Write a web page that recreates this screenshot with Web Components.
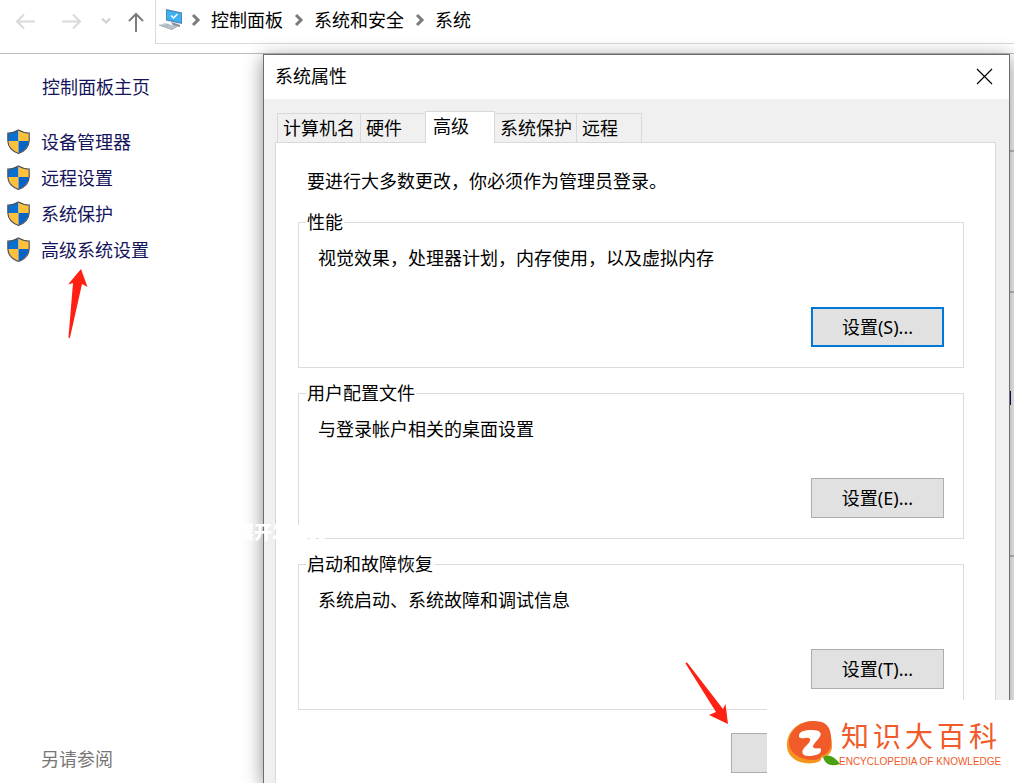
<!DOCTYPE html>
<html lang="zh-CN">
<head>
<meta charset="utf-8">
<title>系统属性</title>
<style>
html, body { margin: 0; }
body {
  font: 18px/24px "Noto Sans", "Noto Sans CJK SC", sans-serif;
  color: #000; background: #fff; overflow: hidden;
}
</style>
</head>
<body>
<control-panel></control-panel>
<script>
const define = (name, html, setup) => customElements.define(name, class extends HTMLElement {
  constructor() {
    super();
    const t = document.createElement('template');
    t.innerHTML = html;
    this.attachShadow({ mode: 'open' }).append(t.content.cloneNode(true));
  }
  connectedCallback() { if (setup) setup(this, this.shadowRoot); }
});

define('nav-bar', `
<style>
:host { display: flex; height: 53px; border-bottom: 1px solid #bdbdbd; }
nav { display: flex; gap: 12px; width: 155px; box-sizing: border-box; padding-left: 12px; flex: none; }
button { border: 0; padding: 0; background: none; height: 43px; flex: none; }
button svg { display: block; }
.history { display: flex; gap: 18px; }
ol {
  flex: 1; display: flex; align-items: center; margin: 0; padding: 0 0 4px 3px; list-style: none;
  height: 39px; border: solid #d9d9d9; border-width: 0 0 1px 1px;
}
li { display: flex; align-items: center; }
a { color: #000; text-decoration: none; }
.sep { width: 31px; }
svg { fill: none; display: block; }
</style>
<nav aria-label="导航">
  <div class="history">
    <button aria-label="后退"><svg width="26" height="43" stroke="#d9d9d9" stroke-width="2"><path d="M23 21.500H5M12 14.500L5 21.500L12 28.500"/></svg></button>
    <button aria-label="前进"><svg width="26" height="43" stroke="#d9d9d9" stroke-width="2"><path d="M6 21.500H24M17 14.500L24 21.500L17 28.500"/></svg></button>
    <button aria-label="最近"><svg width="12" height="43" stroke="#d0d0d0" stroke-width="2"><path d="M2 18.500L6 22.500L10 18.500"/></svg></button>
  </div>
  <button aria-label="向上"><svg width="24" height="43" stroke="#7d7d7d" stroke-width="2"><path d="M12 32V14M5 21L12 14L19 21"/></svg></button>
</nav>
<ol>
  <li><svg width="24" height="26" viewBox="0 0 24 26" aria-hidden="true">
    <path d="M7 2L23 5.500V17L7 13.500Z" fill="#4c86b4"/><path d="M8 3.500L22 6.500V15.500L8 12.500Z" fill="#3fb0f4"/>
    <path d="M12 8.500L14.500 11L18.500 7" stroke="#fff" stroke-width="1.500"/>
    <path d="M12 15L17 16.500L21 18V20L14 18.500Z" fill="#88929b"/>
    <path d="M0 18L6 16L18 19.500L13 22.500Z" fill="#c7d1da"/><path d="M3 18L14 21M6 17L16 20M6 20L10 17" stroke="#a3afb9" stroke-width=".7"/>
    <path d="M0 18L13 22.500L18 19.500" stroke="#9ba8b2"/>
  </svg><svg width="28" height="20"><path d="M10 5L15 10L10 15" stroke="#7a7a7a" stroke-width="3"/></svg></li>
  <li><a href="#">控制面板</a><svg class="sep" height="20"><path d="M13 5L18 10L13 15" stroke="#7a7a7a" stroke-width="3"/></svg></li>
  <li><a href="#">系统和安全</a><svg class="sep" height="20"><path d="M13 5L18 10L13 15" stroke="#7a7a7a" stroke-width="3"/></svg></li>
  <li><a href="#">系统</a></li>
</ol>`);

define('shield-link', `
<style>
:host { display: flex; align-items: center; gap: 11px; height: 36px; padding-left: 7px; }
svg { flex: none; }
a { color: #14145a; text-decoration: none; }
</style>
<svg width="23" height="26" viewBox="0 0 23 26" aria-hidden="true">
  <path d="M11.500 1L1 4.500V12H11.500Z" fill="#0a6fd0"/><path d="M11.500 1L22 4.500V12H11.500Z" fill="#ffc03c"/>
  <path d="M1 12H11.500V24.500Q2 20 1 12Z" fill="#ffc03c"/><path d="M22 12H11.500V24.500Q21 20 22 12Z" fill="#0663c7"/>
  <path d="M11.500 1Q7 4 .8 4V11.500Q1 20.500 11.500 24.500Q22 20.500 22.200 11.500V4Q16 4 11.500 1Z" fill="none" stroke="#4d5358" stroke-width="1.200"/>
</svg>
<a href="#"><slot></slot></a>`);

define('side-bar', `
<style>
:host { display: flex; flex-direction: column; padding: 21px 0 12px; box-sizing: border-box; }
.home { margin: 0 0 25px 42px; color: #14145a; text-decoration: none; }
.see { margin: auto 0 0 41px; color: #777; }
</style>
<a class="home" href="#">控制面板主页</a>
<shield-link>设备管理器</shield-link>
<shield-link>远程设置</shield-link>
<shield-link>系统保护</shield-link>
<shield-link>高级系统设置</shield-link>
<span class="see">另请参阅</span>`);

define('push-button', `
<style>
:host { display: block; width: 133px; }
button {
  display: block; width: 100%; height: 40px; padding: 0; box-sizing: border-box; font: inherit; color: #000;
  background: #e1e1e1; border: 1px solid #adadad; border-radius: 0;
}
:host([focused]) button { border: 2px solid #0078d7; }
</style>
<button><slot></slot></button>`, (host, root) => {
  if (host.hasAttribute('label')) root.querySelector('button').setAttribute('aria-label', host.getAttribute('label'));
});

define('group-box', `
<style>
:host { display: block; }
fieldset { margin: 0; padding: 0 19px 20px; border: 1px solid #dcdcdc; min-width: 0; }
legend { margin-left: -12px; padding: 0 1px; line-height: 23px; }
.inner { display: flex; flex-direction: column; height: 113px; }
p { margin: 12px 0 0; }
.actions { margin-top: auto; display: flex; justify-content: flex-end; }
</style>
<fieldset>
  <legend><slot name="title"></slot></legend>
  <div class="inner"><p><slot></slot></p><div class="actions"><slot name="action"></slot></div></div>
</fieldset>`);

define('tab-strip', `
<style>
:host { display: flex; align-items: flex-end; height: 43px; padding-left: 2px; }
button {
  height: 29px; padding: 0 4px 0 5px; border: 1px solid #d9d9d9; border-bottom: 0; border-radius: 0;
  background: #f0f0f0; font: inherit; color: #000; text-align: left; margin-right: -1px;
}
button.first { min-width: 84px; }
button.short { min-width: 66px; }
button[aria-selected="true"] {
  height: 32px; min-width: 70px; margin-bottom: -1px; padding: 0 7px 4px; background: #fff; position: relative;
}
</style>
<button role="tab" class="first">计算机名</button><button role="tab" class="short">硬件</button><button role="tab" aria-selected="true">高级</button><button role="tab">系统保护</button><button role="tab" class="short">远程</button>`);

define('properties-dialog', `
<style>
:host {
  display: flex; flex-direction: column; box-sizing: border-box; border: 1px solid #6e6e6e; border-bottom: 0;
  background: #f0f0f0; box-shadow: 0 4px 18px rgba(0,0,0,.45);
}
header { display: flex; align-items: center; justify-content: space-between; height: 42px; padding: 0 16px 2px 11px; background: #fff; }
h1 { margin: 0; font: inherit; }
header button { border: 0; padding: 0; background: none; display: block; }
svg { display: block; }
.body { flex: 1; display: flex; flex-direction: column; padding: 0 13px 0 11px; }
.panel {
  flex: 1; display: flex; flex-direction: column; gap: 14px; padding: 26px 31px 8px 22px;
  background: #fff; border: 1px solid #d9d9d9; border-bottom: 0;
}
p { margin: 0 0 4px 9px; }
.env { display: flex; justify-content: flex-end; margin-top: 9px; }
.env push-button { width: 233px; }
</style>
<header><h1>系统属性</h1><button aria-label="关闭"><svg width="17" height="17" fill="none" stroke="#000" stroke-width="1.200"><path d="M1 1L16 16M16 1L1 16"/></svg></button></header>
<div class="body">
  <tab-strip role="tablist"></tab-strip>
  <div class="panel" role="tabpanel">
    <p>要进行大多数更改，你必须作为管理员登录。</p>
    <group-box><span slot="title">性能</span>视觉效果，处理器计划，内存使用，以及虚拟内存<push-button slot="action" focused>设置(S)...</push-button></group-box>
    <group-box><span slot="title">用户配置文件</span>与登录帐户相关的桌面设置<push-button slot="action">设置(E)...</push-button></group-box>
    <group-box><span slot="title">启动和故障恢复</span>系统启动、系统故障和调试信息<push-button slot="action">设置(T)...</push-button></group-box>
    <div class="env"><push-button label="环境变量"></push-button></div>
  </div>
</div>`);

define('site-logo', `
<style>
:host { display: flex; width: 247px; height: 83px; box-sizing: border-box; padding: 17px 0 0 19px; background: #fff; color: #f15a29; }
svg { flex: none; margin-top: 3px; }
.words { display: flex; flex-direction: column; margin-left: -1px; }
.name { font-size: 28px; line-height: 38px; display: flex; gap: 4px; margin-left: 2px; }
.sub { font: 10px/14px "Liberation Sans", sans-serif; white-space: nowrap; }
</style>
<svg width="54" height="50" viewBox="0 0 54 50" aria-hidden="true">
  <path d="M27 1C10 1 0 14 1 27C2 39 15 45 28 43Q36 42 35 38C47 35 47 28 45 18Z" fill="#f7941e"/>
  <path d="M28 1C14 1 3 11 3 22C3 33 14 40 28 40Q35 39 35 36C45 33 46 25 45 16C44 4 37 1 28 1Z" fill="#f15a29"/>
  <path d="M13 17C12 11 19 10 26 10C34 10 37 13 33 18C30 22 27 24 27 27C29 30 34 27 35 29C36 34 29 36 23 36C15 36 15 31 19 27C23 23 26 20 23 18C20 17 16 20 13 17Z" fill="#fff"/>
  <path d="M37 37C43 33 49 37 54 44C46 47 39 45 37 37Z" fill="#4aa010"/>
</svg>
<div class="words"><div class="name"><span>知</span><span>识</span><span>大</span><span>百</span><span>科</span></div><div class="sub">ENCYCLOPEDIA OF KNOWLEDGE</div></div>`);

define('control-panel', `
<style>
:host { display: flex; flex-direction: column; min-height: 100vh; position: relative; }
main { flex: 1; display: grid; grid-template-columns: 263px minmax(0, 1fr); }
side-bar { grid-area: 1 / 1; height: calc(100vh - 54px); }
.content { grid-area: 1 / 2; padding-top: 96px; }
.content hr { margin: 0 0 139px; border: 0; height: 2px; background: #c4c4c4; }
.content hr:nth-of-type(2) { margin-bottom: 98px; }
.change { width: 2px; height: 14px; margin: 0 3px 150px auto; background: #14145a; }
properties-dialog { grid-area: 1 / 2; margin-right: 4px; }
.mark { position: absolute; left: 0; top: 0; pointer-events: none; }
.faint { position: absolute; left: 236px; top: 520px; color: #fff; font-weight: 900; }
site-logo { position: absolute; right: 0; top: 700px; }
</style>
<nav-bar></nav-bar>
<main>
  <side-bar></side-bar>
  <div class="content"><hr><hr><div class="change"></div><hr></div>
  <properties-dialog></properties-dialog>
</main>
<svg class="mark" width="740" height="740" fill="#ff2014" aria-hidden="true">
  <path d="M81 269L87.500 287L82 284L70 337.500Q68.500 339 68.500 337L73 283L68 284.500Z"/>
  <path d="M728 724L709 715L716 712L685.500 663.500Q686 662 687.500 663L723 709L725.500 704Z"/>
</svg>
<span class="faint">展开发工具</span>
<site-logo></site-logo>`);
</script>
</body>
</html>
